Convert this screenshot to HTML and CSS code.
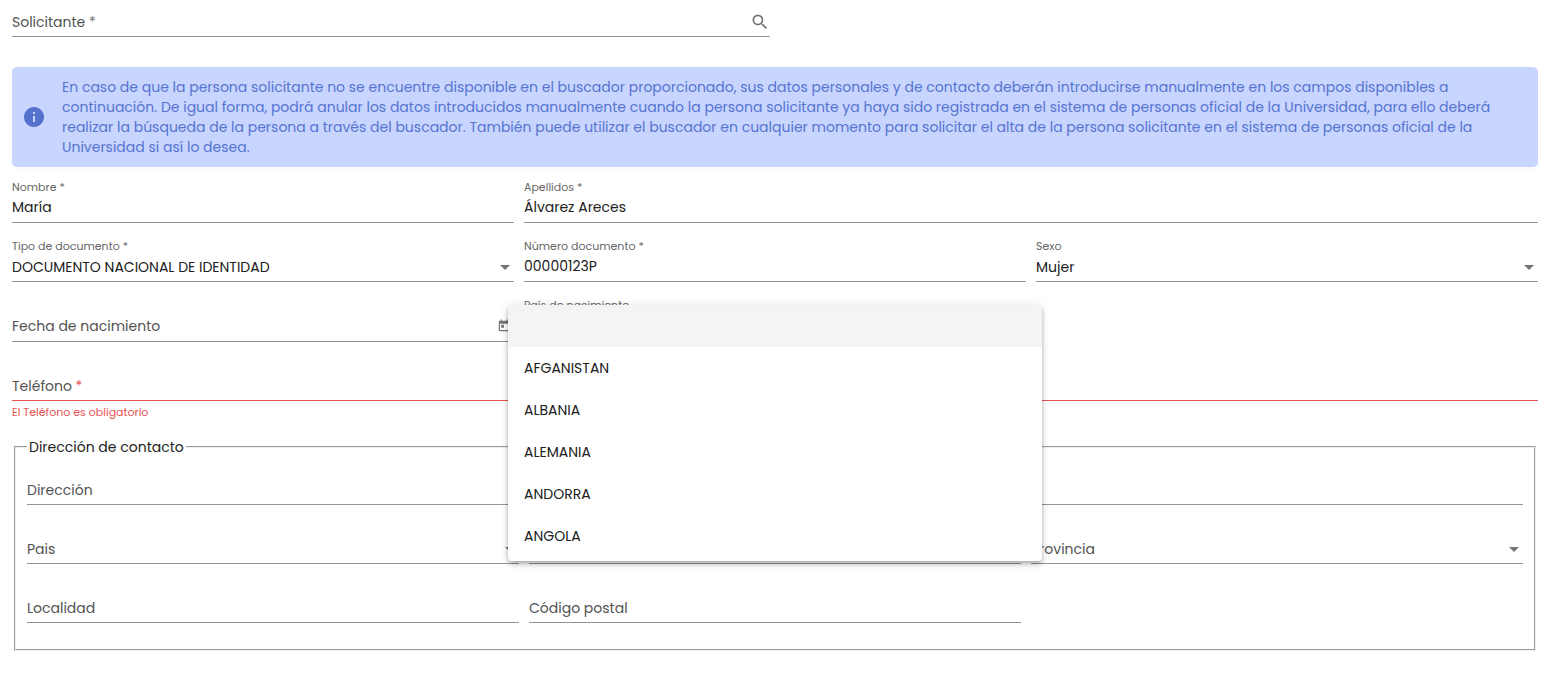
FILE: index.html
```html
<!DOCTYPE html>
<html lang="es">
<head>
<meta charset="utf-8">
<meta name="viewport" content="width=device-width, initial-scale=1">
<title>Solicitante</title>
<link rel="stylesheet" href="styles.css">
</head>
<body>
<form class="form">
  <div class="search-row">
    <div class="field field--compact">
      <label class="label label--inside" for="solicitante">Solicitante <span class="mark">*</span></label>
      <input class="control" id="solicitante" type="text">
      <button class="icon-button" type="button" aria-label="Buscar">
        <svg width="20" height="20" viewBox="0 0 24 24"><path d="M15.5 14h-.79l-.28-.27A6.47 6.47 0 0 0 16 9.5 6.5 6.5 0 1 0 9.5 16c1.61 0 3.09-.59 4.23-1.57l.27.28v.79l5 4.99L20.49 19l-4.99-5zm-6 0C7.01 14 5 11.99 5 9.5S7.01 5 9.5 5 14 7.01 14 9.5 11.99 14 9.5 14z"/></svg>
      </button>
    </div>
  </div>

  <div class="notice" role="note">
    <svg class="notice-icon" width="24" height="24" viewBox="0 0 24 24"><path d="M12 2C6.48 2 2 6.48 2 12s4.48 10 10 10 10-4.48 10-10S17.52 2 12 2zm1 15h-2v-6h2v6zm0-8h-2V7h2v2z"/></svg>
    <p class="notice-text">En caso de que la persona solicitante no se encuentre disponible en el buscador proporcionado, sus datos personales y de contacto deberán introducirse manualmente en los campos disponibles a continuación. De igual forma, podrá anular los datos introducidos manualmente cuando la persona solicitante ya haya sido registrada en el sistema de personas oficial de la Universidad, para ello deberá realizar la búsqueda de la persona a través del buscador. También puede utilizar el buscador en cualquier momento para solicitar el alta de la persona solicitante en el sistema de personas oficial de la Universidad si así lo desea.</p>
  </div>

  <div class="grid">
    <div class="field">
      <label class="label" for="nombre">Nombre <span class="mark">*</span></label>
      <input class="control" id="nombre" type="text" value="María">
    </div>
    <div class="field span-2">
      <label class="label" for="apellidos">Apellidos <span class="mark">*</span></label>
      <input class="control" id="apellidos" type="text" value="Álvarez Areces">
    </div>

    <div class="field">
      <label class="label" for="tipo">Tipo de documento <span class="mark">*</span></label>
      <select class="control" id="tipo"><option>DOCUMENTO NACIONAL DE IDENTIDAD</option></select>
      <svg class="arrow" width="10" height="5" viewBox="0 0 10 5"><path d="M0 0h10L5 5z"/></svg>
    </div>
    <div class="field">
      <label class="label" for="numero">Número documento <span class="mark">*</span></label>
      <input class="control" id="numero" type="text" value="00000123P">
    </div>
    <div class="field">
      <label class="label" for="sexo">Sexo</label>
      <select class="control" id="sexo"><option>Mujer</option></select>
      <svg class="arrow" width="10" height="5" viewBox="0 0 10 5"><path d="M0 0h10L5 5z"/></svg>
    </div>

    <div class="field field--date">
      <label class="label label--inside" for="fecha">Fecha de nacimiento</label>
      <input class="control" id="fecha" type="text">
      <button class="icon-button icon-button--date" type="button" aria-label="Abrir calendario">
        <svg width="14" height="14" viewBox="0 0 24 24"><path d="M19 3h-1V1h-2v2H8V1H6v2H5c-1.11 0-1.99.9-1.99 2L3 19c0 1.1.89 2 2 2h14c1.1 0 2-.9 2-2V5c0-1.1-.9-2-2-2zm0 16H5V8h14v11zM7 10h5v5H7z"/></svg>
      </button>
    </div>
    <div class="field field--open">
      <label class="label" for="nacimiento">País de nacimiento</label>
      <select class="control" id="nacimiento"><option></option></select>
      <ul class="options" role="listbox" aria-label="País de nacimiento">
        <li class="option option--active" role="option" aria-selected="true"></li>
        <li class="option" role="option">AFGANISTAN</li>
        <li class="option" role="option">ALBANIA</li>
        <li class="option" role="option">ALEMANIA</li>
        <li class="option" role="option">ANDORRA</li>
        <li class="option" role="option">ANGOLA</li>
      </ul>
    </div>

    <div class="span-3">
      <div class="field field--error">
        <label class="label label--inside" for="telefono">Teléfono <span class="mark">*</span></label>
        <input class="control" id="telefono" type="tel" aria-describedby="telefono-error">
      </div>
      <p class="error" id="telefono-error">El Teléfono es obligatorio</p>
    </div>
  </div>

  <fieldset class="address">
    <legend class="legend">Dirección de contacto</legend>
    <div class="grid">
      <div class="field span-3">
        <label class="label label--inside" for="direccion">Dirección</label>
        <input class="control" id="direccion" type="text">
      </div>
      <div class="field">
        <label class="label label--inside" for="pais">Pais</label>
        <select class="control" id="pais"><option></option></select>
        <svg class="arrow" width="10" height="5" viewBox="0 0 10 5"><path d="M0 0h10L5 5z"/></svg>
      </div>
      <div class="field">
        <select class="control" aria-label="Comunidad autónoma"><option></option></select>
      </div>
      <div class="field">
        <label class="label label--inside" for="provincia">Provincia</label>
        <select class="control" id="provincia"><option></option></select>
        <svg class="arrow" width="10" height="5" viewBox="0 0 10 5"><path d="M0 0h10L5 5z"/></svg>
      </div>
      <div class="field">
        <label class="label label--inside" for="localidad">Localidad</label>
        <input class="control" id="localidad" type="text">
      </div>
      <div class="field">
        <label class="label label--inside" for="postal">Código postal</label>
        <input class="control" id="postal" type="text">
      </div>
    </div>
  </fieldset>
</form>
</body>
</html>
```
FILE: styles.css
```css
* { box-sizing: border-box; }

body {
  margin: 0;
  background: #fff;
  color: #212121;
  font-family: Poppins, Inter, "Open Sans", sans-serif;
  font-size: 14px;
  line-height: 20px;
}

.form { padding: 8px 8px 28px 12px; }

.search-row,
.grid { display: grid; column-gap: 10px; }
.search-row { grid-template-columns: repeat(2, minmax(0, 1fr)); }
.grid { grid-template-columns: repeat(3, minmax(0, 1fr)); row-gap: 16px; }
.span-2 { grid-column: span 2; }
.span-3 { grid-column: span 3; }

/* Fields: floating label row above the value row */
.field {
  display: grid;
  grid-template-columns: minmax(0, 1fr) auto;
  grid-template-rows: 14px 28px;
  border-bottom: 1px solid #949494;
}
.field--compact { grid-template-rows: 0 28px; }
.field--date,
.field--open { padding-bottom: 1px; }

.label {
  grid-area: 1 / 1 / 2 / 3;
  color: #666;
  font-size: 11px;
  line-height: 14px;
}
.label--inside {
  grid-area: 2 / 1 / 3 / 3;
  align-self: center;
  z-index: 1;
  color: #525252;
  font-size: 14px;
  line-height: 20px;
  pointer-events: none;
}
.label--inside .mark { color: #757575; }

.control {
  grid-area: 2 / 1 / 3 / 3;
  width: 100%;
  min-width: 0;
  margin: 0;
  padding: 0;
  border: 0;
  outline: 0;
  appearance: none;
  background: transparent;
  color: #212121;
  font: inherit;
}
input.control { padding-bottom: 3px; }

.arrow {
  grid-area: 2 / 2;
  place-self: center end;
  margin-right: 4px;
  fill: #757575;
  pointer-events: none;
}

.icon-button {
  grid-area: 2 / 2;
  place-self: center end;
  z-index: 1;
  display: flex;
  padding: 0;
  border: 0;
  background: none;
  fill: #757575;
  cursor: pointer;
}
.icon-button--date { margin-right: 3px; }

.field--error { border-color: #e95353; }
.field--error .mark,
.error { color: #e95353; }
.error {
  margin: 0;
  padding-top: 3px;
  font-size: 11px;
  line-height: 16px;
}

/* Notice */
.notice {
  display: flex;
  align-items: center;
  gap: 16px;
  margin: 30px 0 13px;
  padding: 10px;
  border-radius: 5px;
  background: #c8d5ff;
  box-shadow: 0 2px 4px rgba(0, 0, 0, .03);
  color: #5674d0;
}
.notice-icon { flex: none; fill: #5472cd; }
.notice-text { margin: 0; }

/* Open option list */
.field--open { position: relative; }
.options {
  position: absolute;
  z-index: 2;
  top: 7px;
  left: -16px;
  right: -16px;
  margin: 0;
  padding: 0 0 4px;
  overflow: hidden;
  list-style: none;
  border-radius: 4px;
  background: #fff;
  box-shadow: 0 2px 4px -1px rgba(0, 0, 0, .2), 0 4px 5px rgba(0, 0, 0, .14), 0 1px 10px rgba(0, 0, 0, .12);
}
.option {
  height: 42px;
  padding: 0 16px;
  line-height: 42px;
  cursor: pointer;
}
.option--active { background: #f4f4f4; }

/* Address group */
.address {
  margin: 17px 2px 0;
  padding: 5px 11px 26px;
  border: 2px groove #f0f0f0;
}
.legend { padding: 0 2px; }
```
